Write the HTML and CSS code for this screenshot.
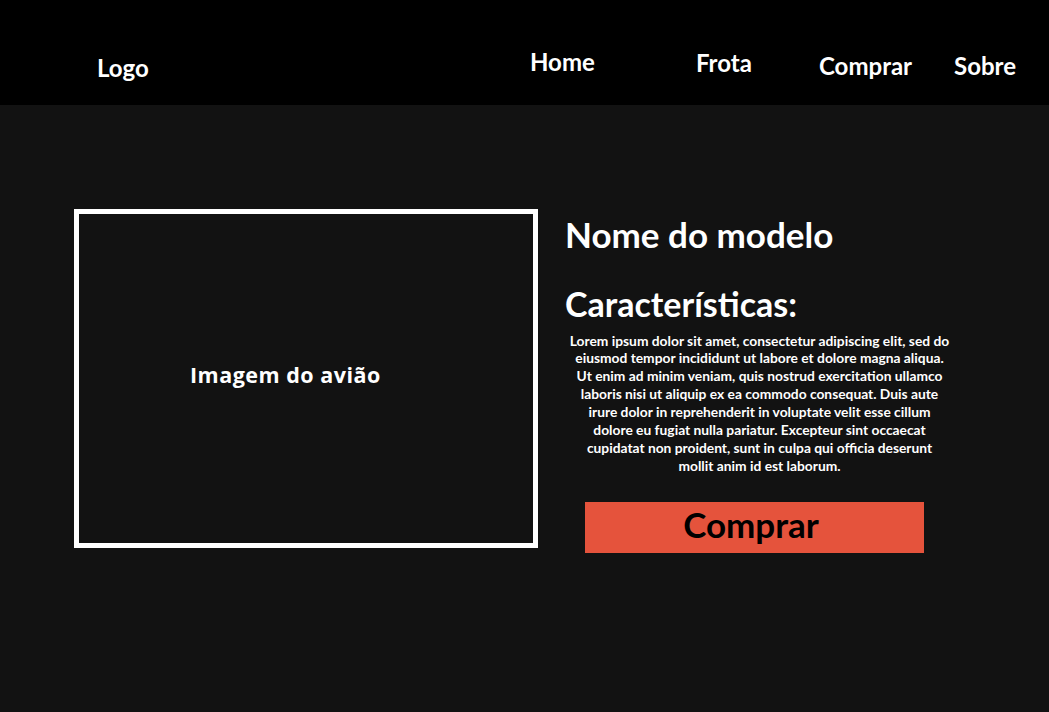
FILE: index.html
```html
<!DOCTYPE html>
<html lang="pt">
<head>
<meta charset="utf-8">
<title>Modelo</title>
<link rel="stylesheet" href="styles.css">
</head>
<body>
<header class="topbar">
  <div class="logo">Logo</div>
  <a class="nav-link nav-home" href="#">Home</a>
  <a class="nav-link nav-frota" href="#">Frota</a>
  <a class="nav-link nav-comprar" href="#">Comprar</a>
  <a class="nav-link nav-sobre" href="#">Sobre</a>
</header>
<main class="product">
  <div class="image-box"><span class="image-label">Imagem do avião</span></div>
  <section class="details">
    <h1 class="model-name">Nome do modelo</h1>
    <h2 class="features-title">Características:</h2>
    <p class="features-text">Lorem ipsum dolor sit amet, consectetur adipiscing elit, sed do<br>
eiusmod tempor incididunt ut labore et dolore magna aliqua.<br>
Ut enim ad minim veniam, quis nostrud exercitation ullamco<br>
laboris nisi ut aliquip ex ea commodo consequat. Duis aute<br>
irure dolor in reprehenderit in voluptate velit esse cillum<br>
dolore eu fugiat nulla pariatur. Excepteur sint occaecat<br>
cupidatat non proident, sunt in culpa qui officia deserunt<br>
mollit anim id est laborum.</p>
    <button class="buy-button" type="button">Comprar</button>
  </section>
</main>
</body>
</html>
```
FILE: styles.css
```css
* { box-sizing: border-box; }

html, body {
  margin: 0;
  padding: 0;
}

body {
  background: #121212;
  color: #ffffff;
  font-family: "Lato", "Liberation Sans", sans-serif;
  font-weight: 700;
  width: 1049px;
  height: 712px;
  overflow: hidden;
}

.topbar {
  height: 105px;
  background: #000000;
  display: grid;
  grid-template-columns: 433px 166px 123px 135px auto;
  align-items: start;
  padding-left: 97px;
}

.logo {
  font-size: 24px;
  line-height: 1;
  margin-top: 56px;
}

.nav-link {
  color: #ffffff;
  text-decoration: none;
  font-size: 24px;
  line-height: 1;
}

.nav-home { margin-top: 50px; }
.nav-frota { margin-top: 51px; }
.nav-comprar { margin-top: 54px; }
.nav-sobre { margin-top: 54px; }

.product {
  display: flex;
  align-items: flex-start;
  gap: 27px;
  padding: 104px 0 0 74px;
}

.image-box {
  width: 464px;
  height: 339px;
  border: 5px solid #ffffff;
  display: flex;
  align-items: center;
  padding-left: 111px;
  padding-bottom: 8px;
  flex: none;
}

.image-label {
  font-family: "Open Sans", "Lato", sans-serif;
  font-size: 21.5px;
  font-weight: 700;
  line-height: 1;
  letter-spacing: 0.5px;
}

.details {
  width: 389px;
  display: flex;
  flex-direction: column;
  align-items: flex-start;
}

.model-name,
.features-title {
  margin: 0;
  line-height: 1;
  font-weight: 700;
}

.model-name {
  font-size: 35px;
  margin-top: 8.3px;
}

.features-title {
  font-size: 34px;
  margin-top: 34.7px;
}

.features-text {
  margin: 10.6px 0 0;
  width: 100%;
  text-align: center;
  font-size: 13.8px;
  line-height: 17.9px;
}

.buy-button {
  margin: 27.5px 0 0 20px;
  width: 339px;
  height: 51px;
  border: none;
  border-radius: 0;
  background: #e5533c;
  color: #000000;
  font-family: "Lato", "Liberation Sans", sans-serif;
  font-weight: 700;
  font-size: 35px;
  line-height: 1;
  padding: 0 7px 7px 0;
  display: flex;
  align-items: center;
  justify-content: center;
}
```
